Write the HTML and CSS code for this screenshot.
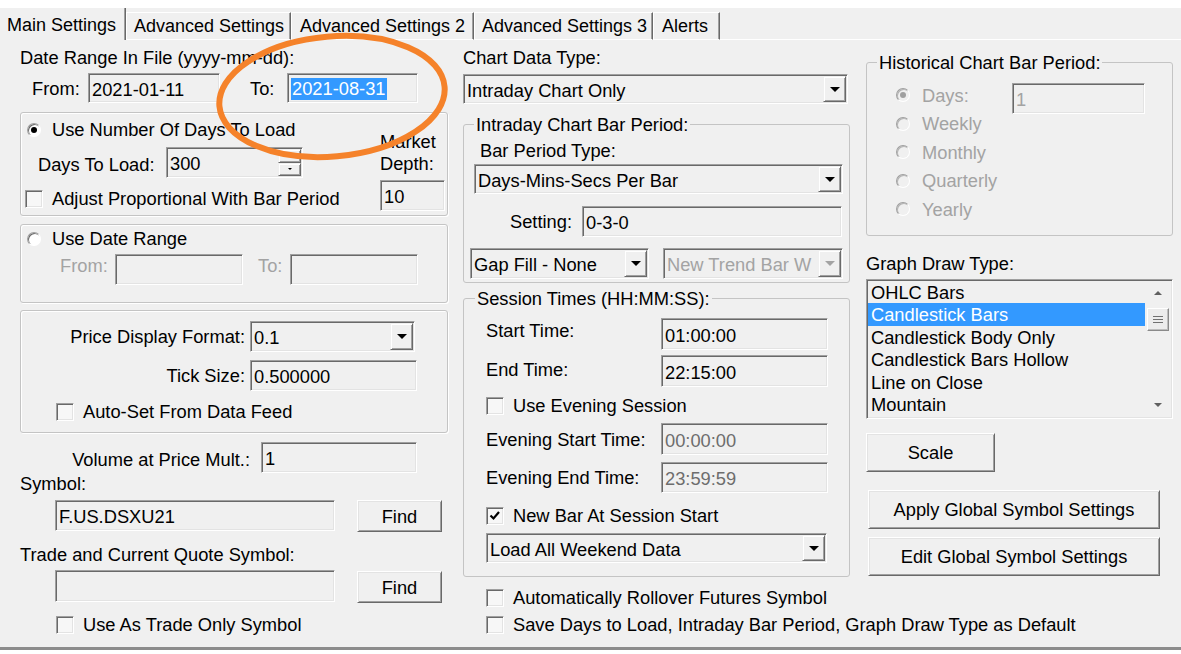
FILE: index.html
```html
<!DOCTYPE html>
<html>
<head>
<meta charset="utf-8">
<link rel="stylesheet" href="styles.css">
</head>
<body>
<div class="topstrip"></div>
<div class="tabs">
  <div class="tab sel t1">Main Settings</div>
  <div class="tab t2">Advanced Settings</div>
  <div class="tab t3">Advanced Settings 2</div>
  <div class="tab t4">Advanced Settings 3</div>
  <div class="tab t5">Alerts</div>
  <div class="tabfill"></div>
</div>

<div class="main">
  <!-- Column 1 -->
  <div class="col">
    <div class="txt mt7">Date Range In File (yyyy-mm-dd):</div>
    <div class="row mt5">
      <span class="txt lbl-from">From:</span>
      <div class="edit w132 h30">2021-01-11</div>
      <span class="txt lbl-to">To:</span>
      <div class="edit w131 h30"><span class="hl">2021-08-31</span></div>
    </div>

    <div class="grp g1">
      <div class="g1-left">
        <div class="row line mt6"><span class="radio on"></span><span class="txt">Use Number Of Days To Load</span></div>
        <div class="row mt7 days">
          <span class="txt lbl-days">Days To Load:</span>
          <div class="edit w137 h31"><span class="fill">300</span><span class="spin"><span class="sb up"></span><span class="sb dn"></span></span></div>
        </div>
        <div class="row line mt10"><span class="check nudge"></span><span class="txt">Adjust Proportional With Bar Period</span></div>
      </div>
      <div class="g1-right">
        <div class="md">Market<br>Depth:</div>
        <div class="edit w65 h31 mt5">10</div>
      </div>
    </div>

    <div class="grp g2">
      <div class="row line mt3"><span class="radio"></span><span class="txt">Use Date Range</span></div>
      <div class="row top mt5">
        <span class="txt dis lbl-from2">From:</span>
        <div class="edit w128 h31"></div>
        <span class="txt dis lbl-to2">To:</span>
        <div class="edit w128 h31"></div>
      </div>
    </div>

    <div class="grp g3">
      <div class="row mt10">
        <span class="rlabel w224">Price Display Format:</span>
        <div class="combo w165 h31"><span class="val">0.1</span><span class="dd"></span></div>
      </div>
      <div class="row mt8">
        <span class="rlabel w224">Tick Size:</span>
        <div class="edit w167 h31">0.500000</div>
      </div>
      <div class="row line mt10 pl35"><span class="check"></span><span class="txt">Auto-Set From Data Feed</span></div>
    </div>

    <div class="row mt9">
      <span class="rlabel w230 mr11 low">Volume at Price Mult.:</span>
      <div class="edit w156 h31">1</div>
    </div>
    <div class="txt">Symbol:</div>
    <div class="row top mt6 pl35">
      <div class="edit w280 h31">F.US.DSXU21</div>
      <div class="btn find">Find</div>
    </div>
    <div class="txt mt12">Trade and Current Quote Symbol:</div>
    <div class="row top mt5 pl35">
      <div class="edit w280 h32"></div>
      <div class="btn find mt1">Find</div>
    </div>
    <div class="row line mt11 pl36"><span class="check"></span><span class="txt">Use As Trade Only Symbol</span></div>
  </div>

  <!-- Column 2 -->
  <div class="col">
    <div class="txt mt7">Chart Data Type:</div>
    <div class="combo w385 h30 mt6"><span class="val">Intraday Chart Only</span><span class="dd"></span></div>

    <fieldset class="fs fs-intra">
      <legend>Intraday Chart Bar Period:</legend>
      <div class="txt mt5 ml6">Bar Period Type:</div>
      <div class="combo w369 h30 mt3"><span class="val">Days-Mins-Secs Per Bar</span><span class="dd"></span></div>
      <div class="row mt12">
        <span class="rlabel w98 mr10">Setting:</span>
        <div class="edit w260 h31">0-3-0</div>
      </div>
      <div class="row mt11">
        <div class="combo w179 h31 mln4"><span class="val">Gap Fill - None</span><span class="dd"></span></div>
        <div class="combo w180 h31 ml14"><span class="val dis">New Trend Bar W</span><span class="dd off"></span></div>
      </div>
    </fieldset>

    <fieldset class="fs fs-sess">
      <legend>Session Times (HH:MM:SS):</legend>
      <div class="row top mt9 ml11">
        <span class="txt w175 lift2">Start Time:</span>
        <div class="edit w167 h32">01:00:00</div>
      </div>
      <div class="row top mt5 ml11">
        <span class="txt w175 lift4">End Time:</span>
        <div class="edit w167 h32">22:15:00</div>
      </div>
      <div class="row line mt8 ml11"><span class="check"></span><span class="txt">Use Evening Session</span></div>
      <div class="row mt7 ml11">
        <span class="txt w175">Evening Start Time:</span>
        <div class="edit w167 h32 dval">00:00:00</div>
      </div>
      <div class="row mt7 ml11">
        <span class="txt w175">Evening End Time:</span>
        <div class="edit w167 h31 dval">23:59:59</div>
      </div>
      <div class="row line mt12 ml11"><span class="check"><svg width="14" height="14" viewBox="0 0 14 14"><path d="M2.5 6.5 L5.5 9.5 L11 3" stroke="#000" stroke-width="2.2" fill="none"/></svg></span><span class="txt">New Bar At Session Start</span></div>
      <div class="combo w341 h30 mt7 ml11"><span class="val">Load All Weekend Data</span><span class="dd"></span></div>
    </fieldset>

    <div class="row line mt10 pl23"><span class="check"></span><span class="txt">Automatically Rollover Futures Symbol</span></div>
    <div class="row line mt6 pl23"><span class="check"></span><span class="txt">Save Days to Load, Intraday Bar Period, Graph Draw Type as Default</span></div>
  </div>

  <!-- Column 3 -->
  <div class="col">
    <fieldset class="fs fs-hist">
      <legend>Historical Chart Bar Period:</legend>
      <div class="radios">
        <div class="ritem"><span class="radio on off"></span><span class="txt dis w90">Days:</span><div class="edit w133 h31 dis dayin">1</div></div>
        <div class="ritem"><span class="radio off"></span><span class="txt dis">Weekly</span></div>
        <div class="ritem"><span class="radio off"></span><span class="txt dis">Monthly</span></div>
        <div class="ritem"><span class="radio off"></span><span class="txt dis">Quarterly</span></div>
        <div class="ritem"><span class="radio off"></span><span class="txt dis">Yearly</span></div>
      </div>
    </fieldset>

    <div class="txt mt17">Graph Draw Type:</div>
    <div class="listbox mt5">
      <div class="items">
        <div class="item">OHLC Bars</div>
        <div class="item sel">Candlestick Bars</div>
        <div class="item">Candlestick Body Only</div>
        <div class="item">Candlestick Bars Hollow</div>
        <div class="item">Line on Close</div>
        <div class="item">Mountain</div>
      </div>
      <div class="vscroll">
        <div class="arrow"><span class="tri-up"></span></div>
        <div class="thumb"><svg width="10" height="9" viewBox="0 0 10 9"><path d="M0 1.5H10M0 4.5H10M0 7.5H10" stroke="#707070" stroke-width="1"/></svg></div>
        <div class="sfill"></div>
        <div class="arrow"><span class="tri-dn"></span></div>
      </div>
    </div>

    <div class="btn scale mt14">Scale</div>
    <div class="btn wide mt18">Apply Global Symbol Settings</div>
    <div class="btn wide mt8">Edit Global Symbol Settings</div>
  </div>
</div>
<div class="bottom"></div>

<svg class="mark" width="250" height="140" viewBox="0 0 250 140">
  <ellipse cx="118" cy="67.5" rx="113" ry="60" transform="rotate(-5 118 67.5)" fill="none" stroke="#f5822a" stroke-width="6"/>
</svg>
</body>
</html>
```

FILE: styles.css
```css
* { box-sizing: border-box; }
html, body { margin: 0; padding: 0; }
body {
  width: 1181px;
  height: 654px;
  overflow: hidden;
  position: relative;
  background: #f0f0f0;
  color: #000;
  font: 18.3px/21px "Liberation Sans", Arial, sans-serif;
}

.topstrip { height: 8px; background: #fff; }

/* Tabs */
.tabs { display: flex; align-items: flex-end; height: 32px; font-size: 18px; }
.tab {
  flex: none;
  height: 28px;
  padding: 3px 0 0 7px;
  white-space: nowrap;
  border-top: 1px solid #fff;
  border-left: 1px solid #fff;
  border-right: 1px solid #696969;
  border-bottom: 1px solid #fff;
  box-shadow: inset -1px 0 0 #a0a0a0;
}
.tab.sel { height: 32px; padding-top: 7px; border-top: 0; border-left: 0; border-bottom: 0; }
.t1 { width: 126px; }
.t2 { width: 165px; }
.t3 { width: 183px; padding-left: 8px; }
.t4 { width: 179px; }
.t5 { width: 67px; padding-left: 8px; }
.tabfill { flex: 1; height: 1px; border-bottom: 1px solid #fff; }

/* Main grid */
.main {
  display: grid;
  grid-template-columns: 428px 388px 307px;
  column-gap: 15px;
  padding-left: 20px;
  height: 607px;
}
.col { display: flex; flex-direction: column; align-items: flex-start; min-width: 0; }
.bottom { height: 7px; border-top: 3px solid #8c8c8c; background: #fff; }

/* Generic */
.txt { white-space: nowrap; line-height: 21px; flex: none; }
.row { display: flex; align-items: center; flex: none; }
.row.top { align-items: flex-start; }
.line { height: 21px; }
.dis { color: #a3a3a3; }
.dval { color: #6d6d6d; }
.low { padding-top: 4px; }
.lift2 { margin-top: 2px; }
.lift4 { margin-top: 4px; }

.mt1 { margin-top: 1px; } .mt3 { margin-top: 3px; } .mt4 { margin-top: 4px; }
.mt5 { margin-top: 5px; } .mt6 { margin-top: 6px; } .mt7 { margin-top: 7px; }
.mt8 { margin-top: 8px; } .mt9 { margin-top: 9px; } .mt10 { margin-top: 10px; }
.mt11 { margin-top: 11px; } .mt12 { margin-top: 12px; } .mt13 { margin-top: 13px; }
.mt14 { margin-top: 14px; } .mt17 { margin-top: 17px; } .mt18 { margin-top: 18px; }
.ml6 { margin-left: 6px; } .ml11 { margin-left: 11px; } .ml14 { margin-left: 14px; }
.mln4 { margin-left: -4px; }
.mr10 { margin-right: 10px !important; } .mr11 { margin-right: 11px !important; }
.pl23 { padding-left: 23px; } .pl35 { padding-left: 35px; } .pl36 { padding-left: 36px; }

.w65 { width: 65px; } .w90 { width: 90px; } .w98 { width: 98px; }
.w128 { width: 128px; } .w131 { width: 131px; } .w132 { width: 132px; }
.w133 { width: 133px; } .w137 { width: 137px; } .w156 { width: 156px; }
.w165 { width: 165px; } .w167 { width: 167px; } .w175 { width: 175px; }
.w179 { width: 179px; } .w180 { width: 180px; } .w224 { width: 224px; }
.w230 { width: 230px; } .w260 { width: 260px; } .w280 { width: 280px; }
.w341 { width: 341px; } .w369 { width: 369px; } .w385 { width: 385px; }
.h30 { height: 30px; } .h31 { height: 31px; } .h32 { height: 32px; }

.rlabel { text-align: right; white-space: nowrap; margin-right: 5px; flex: none; }

/* Sunken edit */
.edit, .combo {
  flex: none;
  display: flex;
  align-items: center;
  padding-left: 3px;
  padding-top: 2px;
  background: #f0f0f0;
  white-space: nowrap;
  overflow: hidden;
  border: 1px solid;
  border-color: #a0a0a0 #ffffff #ffffff #a0a0a0;
  box-shadow: inset 1px 1px 0 #696969, inset -1px -1px 0 #e3e3e3;
}
.edit .fill, .combo .val { flex: 1; overflow: hidden; }
.hl { background: #3399ff; color: #fff; line-height: 22px; padding: 0 1px; }

.dd, .sb {
  flex: none;
  display: flex;
  align-items: center;
  justify-content: center;
  background: #f0f0f0;
  border: 1px solid;
  border-color: #f0f0f0 #696969 #696969 #f0f0f0;
  box-shadow: inset 1px 1px 0 #fff, inset -1px -1px 0 #a0a0a0;
}
.dd { width: 23px; align-self: stretch; margin: -1px 1px 1px 1px; }
.dd::after {
  content: "";
  border-left: 5px solid transparent;
  border-right: 5px solid transparent;
  border-top: 5px solid #000;
}
.dd.off::after { border-top-color: #a3a3a3; }

.spin { display: flex; flex-direction: column; width: 23px; align-self: stretch; margin: -1px 1px 1px 1px; }
.sb { flex: 1; }
.sb.up::after { content: ""; border-left: 2px solid transparent; border-right: 2px solid transparent; border-bottom: 2px solid #000; }
.sb.dn::after { content: ""; border-left: 2px solid transparent; border-right: 2px solid transparent; border-top: 2px solid #000; }

/* Raised button */
.btn {
  flex: none;
  display: flex;
  align-items: center;
  justify-content: center;
  white-space: nowrap;
  padding-top: 1px;
  background: #f0f0f0;
  border: 1px solid;
  border-color: #ffffff #696969 #696969 #ffffff;
  box-shadow: inset 1px 1px 0 #e3e3e3, inset -1px -1px 0 #a0a0a0;
}
.find { width: 85px; height: 32px; margin-left: 22px; }
.scale { width: 129px; height: 39px; }
.wide { width: 292px; height: 39px; margin-left: 2px; }

/* Radio & check */
.radio {
  flex: none;
  width: 14px;
  height: 14px;
  border-radius: 50%;
  border: 1px solid;
  border-color: #a0a0a0 #ffffff #ffffff #a0a0a0;
  background: #fff;
  box-shadow: inset 1px 1px 0 #696969;
  display: flex;
  align-items: center;
  justify-content: center;
  margin-right: 11px;
}
.radio.on::after { content: ""; width: 6px; height: 6px; border-radius: 50%; background: #000; }
.radio.off { background: #f0f0f0; box-shadow: inset 1px 1px 0 #b4b4b4; }
.radio.on.off::after { background: #a0a0a0; }

.check {
  flex: none;
  width: 18px;
  height: 18px;
  border: 1px solid;
  border-color: #a0a0a0 #ffffff #ffffff #a0a0a0;
  box-shadow: inset 1px 1px 0 #696969, inset -1px -1px 0 #e3e3e3;
  background: #f7f7f7;
  margin-right: 9px;
  display: flex;
  align-items: center;
  justify-content: center;
}
.check.nudge { margin-left: -2px; }

/* Group boxes */
.grp {
  flex: none;
  width: 428px;
  border: 1px solid #c4c4c4;
  border-radius: 3px;
  box-shadow: inset 1px 1px 0 #fff, 1px 1px 0 #fff;
}
.g1 { height: 104px; margin-top: 9px; display: flex; }
.g1-left { width: 359px; padding-left: 6px; display: flex; flex-direction: column; }
.g1-right { padding-top: 18px; display: flex; flex-direction: column; }
.md { line-height: 22px; white-space: nowrap; }
.lbl-from { padding-left: 12px; width: 68px; }
.lbl-to { width: 37px; margin-left: 30px; }
.days { padding-left: 11px; }
.lbl-days { width: 128px; padding-top: 3px; }

.g2 { height: 79px; margin-top: 8px; padding-left: 6px; }
.lbl-from2 { width: 55px; margin-left: 33px; margin-top: 1px; }
.lbl-to2 { width: 32px; margin-left: 15px; margin-top: 1px; }

.g3 { height: 123px; margin-top: 7px; }

/* Fieldsets */
.fs {
  flex: none;
  margin: 0;
  min-width: 0;
  border: 1px solid #c4c4c4;
  border-radius: 3px;
  padding: 0 6px 0 10px;
}
.fs legend { padding: 0 2px; line-height: 21px; white-space: nowrap; }
.fs-intra { width: 387px; margin-top: 10px; padding-bottom: 3px; }
.fs-sess { width: 387px; margin-top: 5px; padding-left: 11px; padding-bottom: 13px; }
.fs-hist { width: 307px; margin-top: 12px; padding-bottom: 11px; }

.radios { margin-top: 8px; padding-left: 19px; display: flex; flex-direction: column; }
.ritem { height: 28.5px; display: flex; align-items: center; }
.radios .radio { margin-right: 12px; }
.dayin { align-self: flex-start; margin-top: 2px; }

/* Listbox */
.listbox {
  flex: none;
  width: 307px;
  height: 140px;
  display: flex;
  border: 1px solid;
  border-color: #a0a0a0 #ffffff #ffffff #a0a0a0;
  box-shadow: inset 1px 1px 0 #696969, inset -1px -1px 0 #e3e3e3;
  padding: 1px;
  background: #f0f0f0;
}
.items { flex: 1; display: flex; flex-direction: column; }
.item { height: 22.6px; line-height: 23px; padding-left: 3px; white-space: nowrap; }
.item.sel { background: #3399ff; color: #fff; }
.vscroll { width: 26px; display: flex; flex-direction: column; align-items: center; background: #f0f0f0; }
.arrow { height: 24px; width: 100%; display: flex; align-items: center; justify-content: center; }
.tri-up { border-left: 4px solid transparent; border-right: 4px solid transparent; border-bottom: 4px solid #606060; }
.tri-dn { border-left: 4px solid transparent; border-right: 4px solid transparent; border-top: 4px solid #606060; }
.thumb {
  width: 22px;
  height: 23px;
  margin-top: 3px;
  display: flex;
  align-items: center;
  justify-content: center;
  border: 1px solid;
  border-color: #ffffff #8a8a8a #8a8a8a #ffffff;
  box-shadow: inset -1px -1px 0 #bdbdbd;
  background: #ececec;
}
.sfill { flex: 1; }

/* Annotation */
.mark { position: absolute; left: 214px; top: 29px; pointer-events: none; }
```
